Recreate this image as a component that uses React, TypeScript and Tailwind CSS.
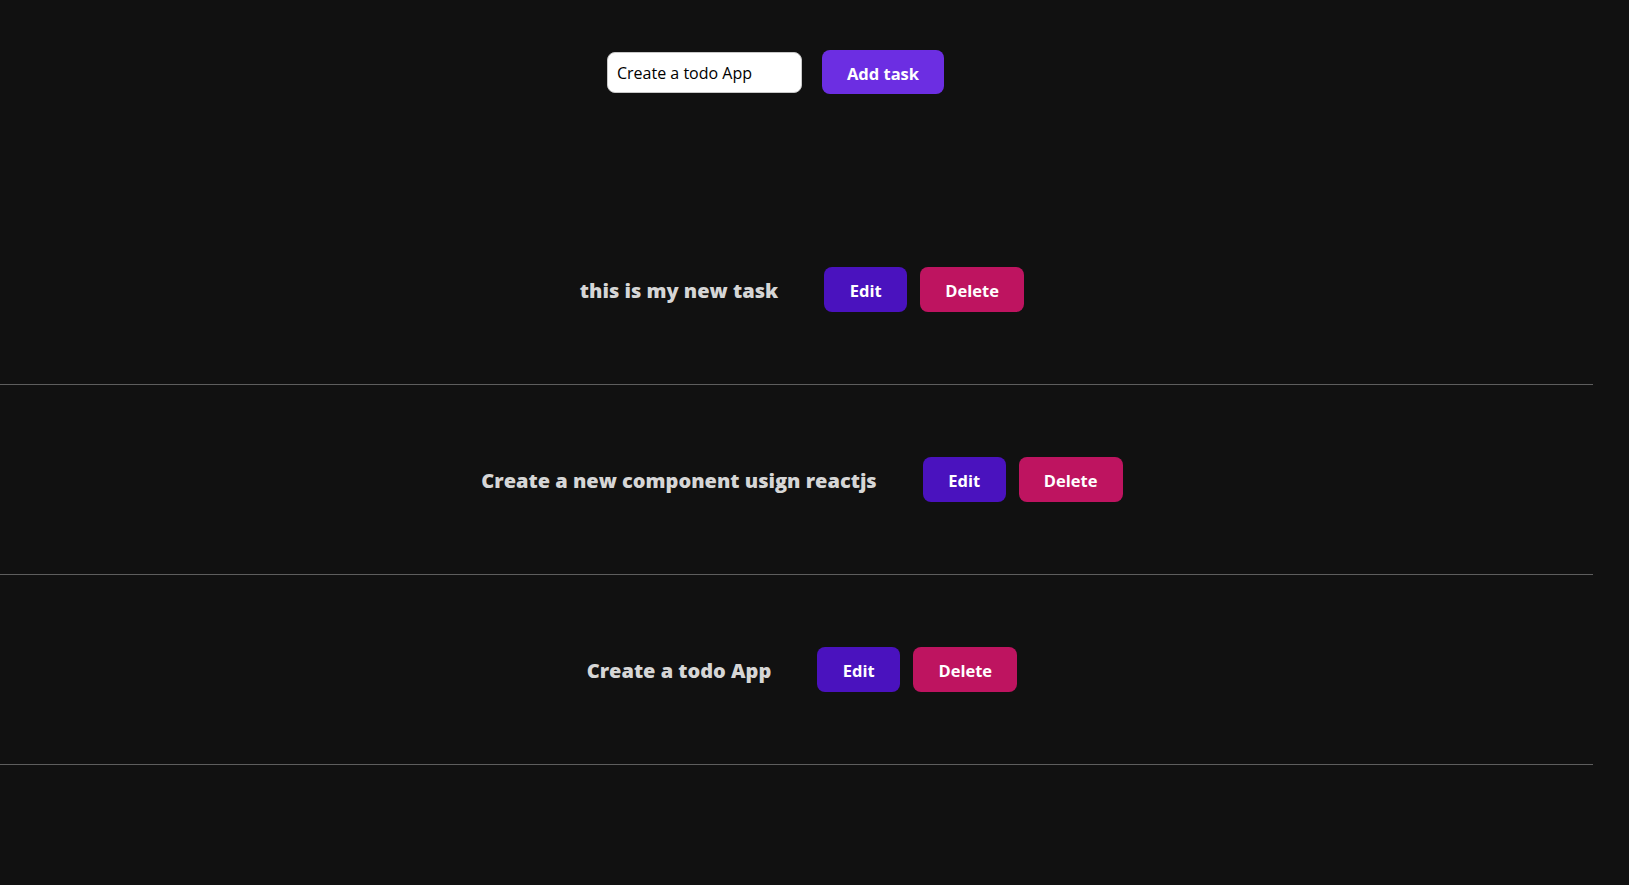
import { useState } from "react";

const tasks = [
  "this is my new task",
  "Create a new component usign reactjs",
  "Create a todo App",
];

export default function App() {
  const [value, setValue] = useState("Create a todo App");

  return (
    <div className="min-h-screen w-full bg-[#111111] font-['Open_Sans','Noto_Sans',sans-serif]">
      <div className="w-[1593px]">
        {/* Form */}
        <div className="flex justify-center items-center pt-[50px] pr-[42px]">
          <input
            value={value}
            onChange={(e) => setValue(e.target.value)}
            className="w-[195px] h-[41px] bg-white text-black text-[16px] px-[9px] pt-[2px] rounded-lg border border-[#c8c8c8] outline-none"
          />
          <button className="ml-[20px] h-[44px] w-[122px] pt-[4px] rounded-lg bg-[#6c2ee2] text-white font-bold text-[16.5px]">
            Add task
          </button>
        </div>

        {/* List */}
        <ul className="mt-[101px]">
          {tasks.map((task) => (
            <li
              key={task}
              className="flex justify-center items-center py-[72px] pl-[11px] border-b border-[#5e5e5e]"
            >
              <span className="mr-[46px] pt-[2px] text-[20px] font-extrabold text-[#d6d6d6]">
                {task}
              </span>
              <button className="h-[45px] w-[83px] pt-[4px] rounded-lg bg-[#4a12be] text-white font-bold text-[16.5px]">
                Edit
              </button>
              <button className="ml-[13px] h-[45px] w-[104px] pt-[4px] rounded-lg bg-[#be1460] text-white font-bold text-[16.5px]">
                Delete
              </button>
            </li>
          ))}
        </ul>
      </div>
    </div>
  );
}
